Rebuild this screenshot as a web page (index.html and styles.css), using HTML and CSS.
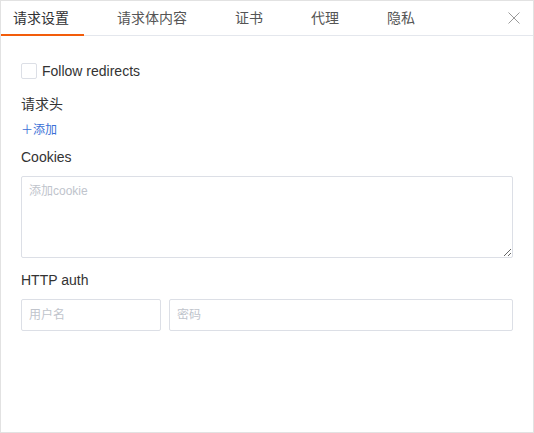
FILE: index.html
```html
<!DOCTYPE html>
<html lang="zh">
<head>
<meta charset="utf-8">
<link rel="stylesheet" href="styles.css">
</head>
<body>
<div class="panel">
  <div class="tabbar">
    <div class="tabs">
      <div class="tab active">请求设置</div>
      <div class="tab">请求体内容</div>
      <div class="tab">证书</div>
      <div class="tab">代理</div>
      <div class="tab">隐私</div>
    </div>
    <div class="close">
      <svg width="12" height="12" viewBox="0 0 12 12"><path d="M0.5 0.5 L11.5 11.5 M11.5 0.5 L0.5 11.5" stroke="#9a9a9a" stroke-width="1" fill="none"/></svg>
    </div>
  </div>
  <div class="content">
    <label class="check-row"><span class="checkbox"></span><span class="check-label">Follow redirects</span></label>
    <div class="label label-headers">请求头</div>
    <div class="add-link">＋添加</div>
    <div class="label label-cookies">Cookies</div>
    <textarea class="cookie-box" placeholder="添加cookie"></textarea>
    <div class="label label-auth">HTTP auth</div>
    <div class="auth-row">
      <input class="field field-user" placeholder="用户名">
      <input class="field field-pass" placeholder="密码">
    </div>
  </div>
</div>
</body>
</html>
```

FILE: styles.css
```css
* { box-sizing: border-box; }
html, body { margin: 0; padding: 0; background: #fff; }
body {
  font-family: "Liberation Sans", "Noto Sans CJK SC", sans-serif;
  color: #333;
}
.panel {
  width: 534px;
  height: 433px;
  border: 1px solid #e2e2e2;
  background: #fff;
}
.tabbar {
  height: 35px;
  border-bottom: 1px solid #e4e7ed;
  display: flex;
  justify-content: space-between;
  align-items: center;
}
.tabs {
  display: flex;
  gap: 21px;
  height: 100%;
}
.tab {
  position: relative;
  padding: 0 15px 0 12px;
  font-size: 14px;
  line-height: 34px;
  color: #555;
}
.tab.active { color: #303133; }
.tab.active::after {
  content: "";
  position: absolute;
  left: 0;
  right: 0;
  bottom: -1px;
  height: 2px;
  background: #f25c0a;
}
.close {
  width: 12px;
  height: 12px;
  margin-right: 13px;
  display: flex;
}
.content {
  padding: 25px 20px 0 20px;
  display: flex;
  flex-direction: column;
}
.check-row {
  display: flex;
  align-items: center;
  height: 20px;
  font-size: 14px;
}
.checkbox {
  width: 16px;
  height: 16px;
  border: 1px solid #dcdfe6;
  border-radius: 2px;
  background: #fff;
}
.check-label { margin-left: 5px; color: #333; }
.label {
  font-size: 14px;
  line-height: 20px;
  color: #333;
}
.label-headers { margin-top: 13px; }
.add-link {
  margin-top: 6px;
  font-size: 12px;
  line-height: 20px;
  color: #3a6fd6;
}
.label-cookies { margin-top: 7px; }
.cookie-box {
  margin-top: 9px;
  width: 100%;
  height: 82px;
  border: 1px solid #dcdfe6;
  border-radius: 2px;
  padding: 5px 7px;
  font-family: inherit;
  font-size: 12px;
  line-height: 18px;
  resize: vertical;
  outline: none;
}
.cookie-box::placeholder, .field::placeholder { color: #c0c4cc; }
.label-auth { margin-top: 12px; }
.auth-row {
  margin-top: 9px;
  display: flex;
  gap: 8px;
}
.field {
  height: 32px;
  border: 1px solid #dcdfe6;
  border-radius: 2px;
  padding: 0 7px;
  font-family: inherit;
  font-size: 12px;
  outline: none;
}
.field-user { width: 140px; }
.field-pass { flex: 1; min-width: 0; }
```
